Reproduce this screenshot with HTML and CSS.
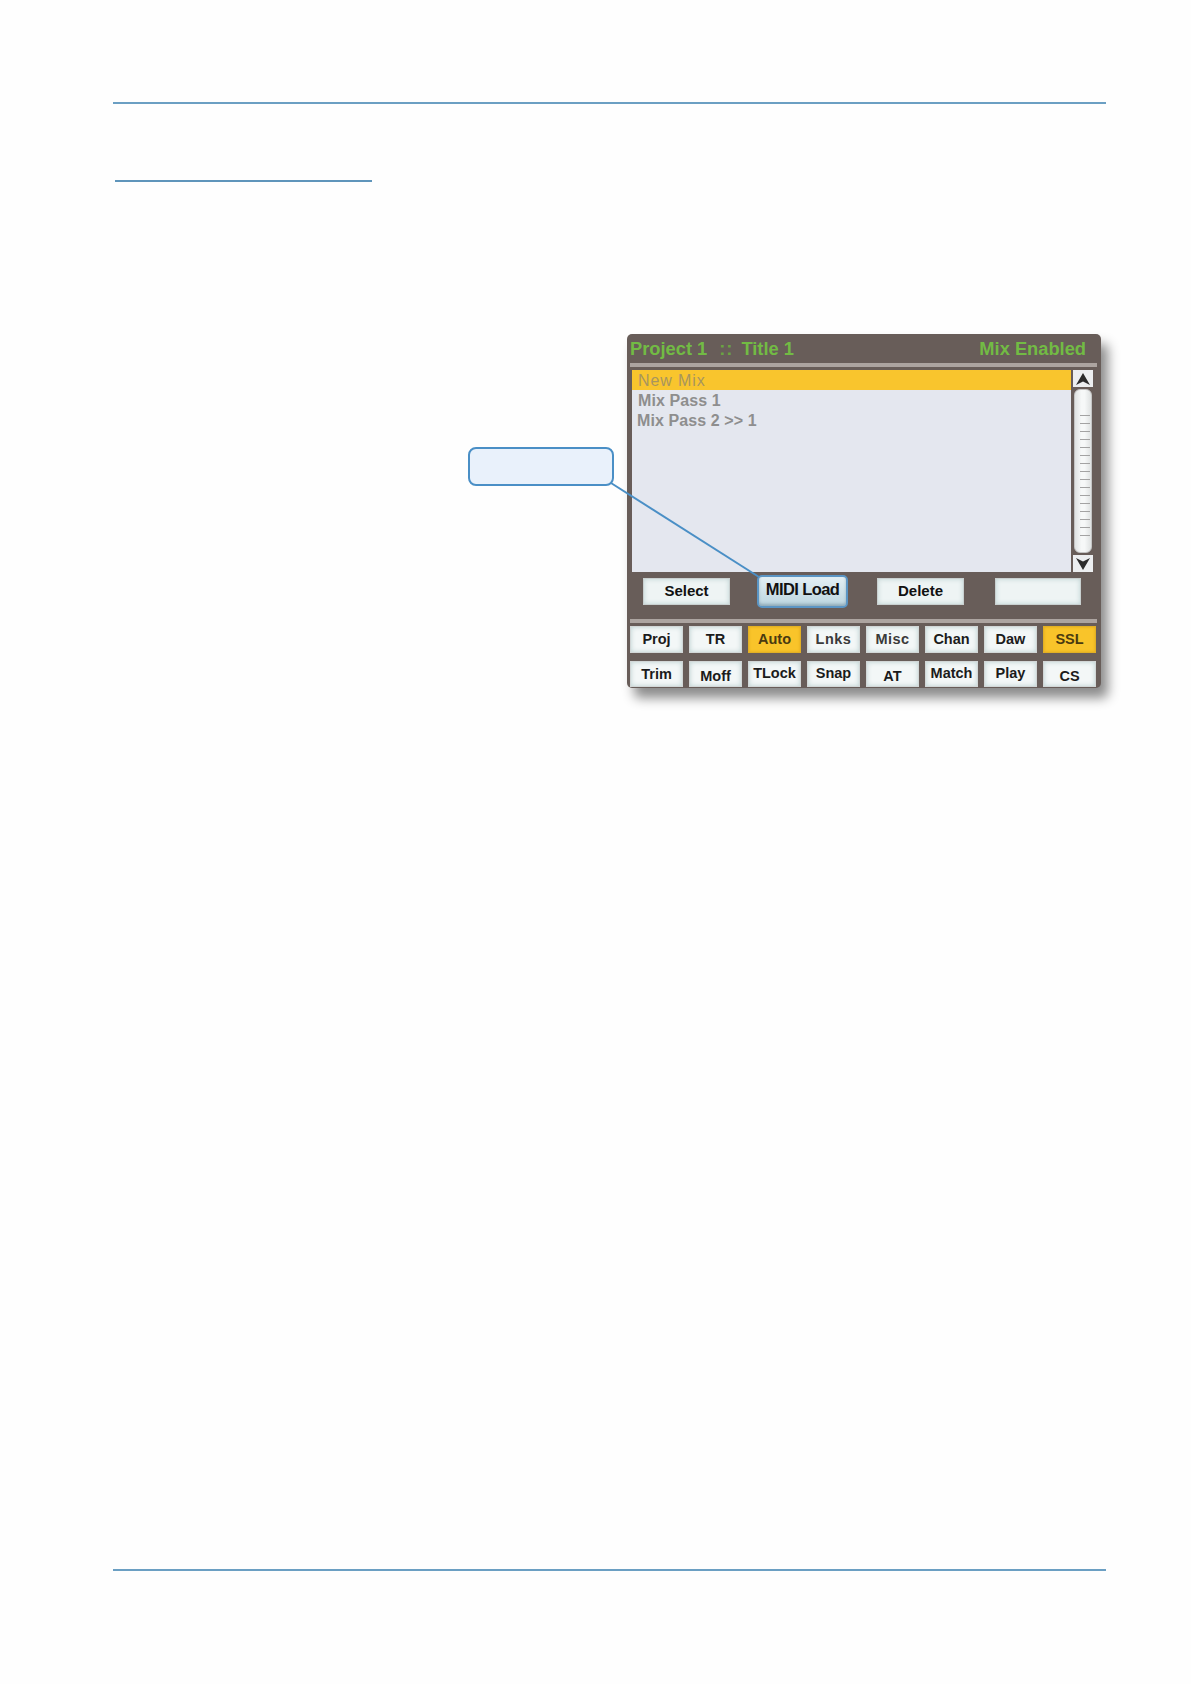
FILE: index.html
```html
<!DOCTYPE html>
<html>
<head>
<meta charset="utf-8">
<title>Mix list</title>
<link rel="stylesheet" href="styles.css">
</head>
<body>
<div class="page">
  <div class="rule-top"></div>
  <div class="rule-short"></div>

  <div class="figure">
    <div class="callout"></div>
    <svg class="leader" width="1191" height="360" viewBox="0 0 1191 360">
      <line x1="611" y1="149" x2="759" y2="243" stroke="#4a8fc6" stroke-width="2"/>
    </svg>

    <div class="panel">
      <div class="title-row">
        <div class="title-left"><span>Project 1</span><span class="colons">::</span><span>Title 1</span></div>
        <div class="title-right">Mix Enabled</div>
      </div>
      <div class="sep"></div>
      <div class="list-area">
        <div class="list">
          <div class="row row-sel">New Mix</div>
          <div class="row">Mix Pass 1</div>
          <div class="row row-shift">Mix Pass 2 &gt;&gt; 1</div>
        </div>
        <div class="scroll">
          <div class="arrow">
            <svg width="16" height="14" viewBox="0 0 16 14"><path d="M8 1 L15 13 L8 9.5 L1 13 Z" fill="#2b2b2b"/></svg>
          </div>
          <div class="track"></div>
          <div class="arrow">
            <svg width="16" height="14" viewBox="0 0 16 14"><path d="M8 13 L15 1 L8 4.5 L1 1 Z" fill="#2b2b2b"/></svg>
          </div>
        </div>
      </div>
      <div class="btn-row">
        <div class="btn btn-select">Select</div>
        <div class="btn btn-midi">MIDI Load</div>
        <div class="btn btn-delete">Delete</div>
        <div class="btn btn-blank"></div>
      </div>
      <div class="sep sep2"></div>
      <div class="tabs">
        <div class="tab">Proj</div>
        <div class="tab">TR</div>
        <div class="tab tab-on">Auto</div>
        <div class="tab tab-light">Lnks</div>
        <div class="tab tab-light">Misc</div>
        <div class="tab">Chan</div>
        <div class="tab">Daw</div>
        <div class="tab tab-on">SSL</div>
        <div class="tab tab-low">Trim</div>
        <div class="tab tab-low2">Moff</div>
        <div class="tab">TLock</div>
        <div class="tab">Snap</div>
        <div class="tab tab-low2">AT</div>
        <div class="tab">Match</div>
        <div class="tab">Play</div>
        <div class="tab tab-low2">CS</div>
      </div>
    </div>
  </div>

  <div class="rule-bottom"></div>
</div>
</body>
</html>
```

FILE: styles.css
```css
html, body {
  margin: 0;
  padding: 0;
  background: #fefefe;
}

.page {
  width: 1191px;
  height: 1684px;
  box-sizing: border-box;
  padding-top: 102px;
  padding-bottom: 113px;
  display: flex;
  flex-direction: column;
  font-family: "Liberation Sans", Arial, sans-serif;
}

.rule-top {
  margin-left: 113px;
  width: 993px;
  height: 2px;
  background: #6b9fc3;
}

.rule-short {
  margin-top: 76px;
  margin-left: 115px;
  width: 257px;
  height: 2px;
  background: #5f95bb;
}

.rule-bottom {
  margin-top: auto;
  margin-left: 113px;
  width: 993px;
  height: 2px;
  background: #6b9fc3;
}

.figure {
  position: relative;
  margin-top: 152px;
  padding-left: 627px;
  display: flex;
}

.callout {
  position: absolute;
  left: 468px;
  top: 113px;
  width: 142px;
  height: 35px;
  border: 2px solid #4a8fc6;
  border-radius: 8px;
  background: #e9f1fb;
}

.leader {
  position: absolute;
  left: 0;
  top: 0;
  z-index: 2;
  pointer-events: none;
}

.panel {
  width: 474px;
  height: 354px;
  box-sizing: border-box;
  padding: 0 4px 1px 3px;
  background: #685d59;
  border-radius: 5px;
  box-shadow: 7px 10px 12px rgba(0, 0, 0, 0.45);
  display: flex;
  flex-direction: column;
}

.title-row {
  height: 29px;
  display: flex;
  justify-content: space-between;
  align-items: center;
  padding: 1px 11px 0 0;
  box-sizing: border-box;
  color: #72bb44;
  font-weight: bold;
  font-size: 18.3px;
}

.title-left {
  display: flex;
}

.colons {
  margin: 0 8px 0 12px;
  letter-spacing: 1px;
  color: #6aa442;
}

.sep {
  height: 4px;
  background: #aca4a0;
}

.list-area {
  margin: 3px 4px 0 2px;
  height: 202px;
  display: flex;
  gap: 2px;
}

.list {
  flex: 1;
  background: #e4e7ef;
}

.row {
  height: 20px;
  line-height: 21px;
  padding-left: 6px;
  font-size: 16px;
  font-weight: bold;
  color: #8e8e8e;
  letter-spacing: 0.1px;
}

.row-sel {
  height: 20px;
  line-height: 21px;
  background: #f9c52d;
  color: #a8955f;
  font-weight: normal;
  font-size: 16px;
  letter-spacing: 0.9px;
}

.row-shift {
  padding-left: 5px;
}

.scroll {
  width: 20px;
  display: flex;
  flex-direction: column;
  gap: 1px;
}

.arrow {
  height: 17px;
  background: #eceef0;
  display: flex;
  align-items: center;
  justify-content: center;
}

.track {
  flex: 1;
  margin: 1px 1px;
  border: 1px solid #c4c4c4;
  border-radius: 6px;
  background:
    repeating-linear-gradient(to bottom, transparent 0, transparent 7px, #a3a3a3 7px, #a3a3a3 8px) 5px 18px / 10px calc(100% - 30px) no-repeat,
    linear-gradient(to right, #dfe2e2, #f6f8f8 40%, #f6f8f8 60%, #dfe2e2);
}

.btn-row {
  margin-top: 3px;
  height: 33px;
  display: flex;
  align-items: center;
  padding-left: 13px;
}

.btn {
  height: 27px;
  box-sizing: border-box;
  display: flex;
  align-items: center;
  justify-content: center;
  font-weight: bold;
  font-size: 15px;
  color: #111;
  background: #eef4f4;
  border: 1px solid #c9d0d0;
  box-shadow: inset 0 0 5px #bfd3d3;
  padding-bottom: 2px;
}

.btn-select { width: 87px; }
.btn-midi {
  width: 91px;
  height: 33px;
  margin-left: 27px;
  border: 2px solid #5b95c4;
  border-radius: 5px;
  background: linear-gradient(#e3eff4, #bcd5df);
  box-shadow: inset 0 -2px 3px rgba(60, 90, 110, 0.35);
  font-size: 16.5px;
  letter-spacing: -0.6px;
  padding-bottom: 4px;
}
.btn-delete { width: 87px; margin-left: 29px; }
.btn-blank { width: 86px; margin-left: 31px; }

.sep2 {
  margin-top: 11px;
}

.tabs {
  margin-top: 3px;
  display: grid;
  grid-template-columns: repeat(8, 53px);
  grid-template-rows: 27px 26px;
  column-gap: 6px;
  row-gap: 8px;
}

.tab {
  box-sizing: border-box;
  display: flex;
  align-items: center;
  justify-content: center;
  font-weight: bold;
  font-size: 14.5px;
  color: #1b1b1b;
  background: #f3f7f7;
  border: 1px solid #d2d7d7;
  box-shadow: inset 0 0 5px #bdd1d1;
  padding-bottom: 2px;
}

.tab-on {
  background: #f9c42a;
  border-color: #e2b025;
  box-shadow: inset 0 0 3px #e0a81c;
  color: #4a3a10;
}

.tab-light {
  color: #3a3a3a;
  letter-spacing: 0.5px;
}

.tab-low { padding-top: 1px; padding-bottom: 1px; }
.tab-low2 { padding-top: 4px; padding-bottom: 0; }
```
